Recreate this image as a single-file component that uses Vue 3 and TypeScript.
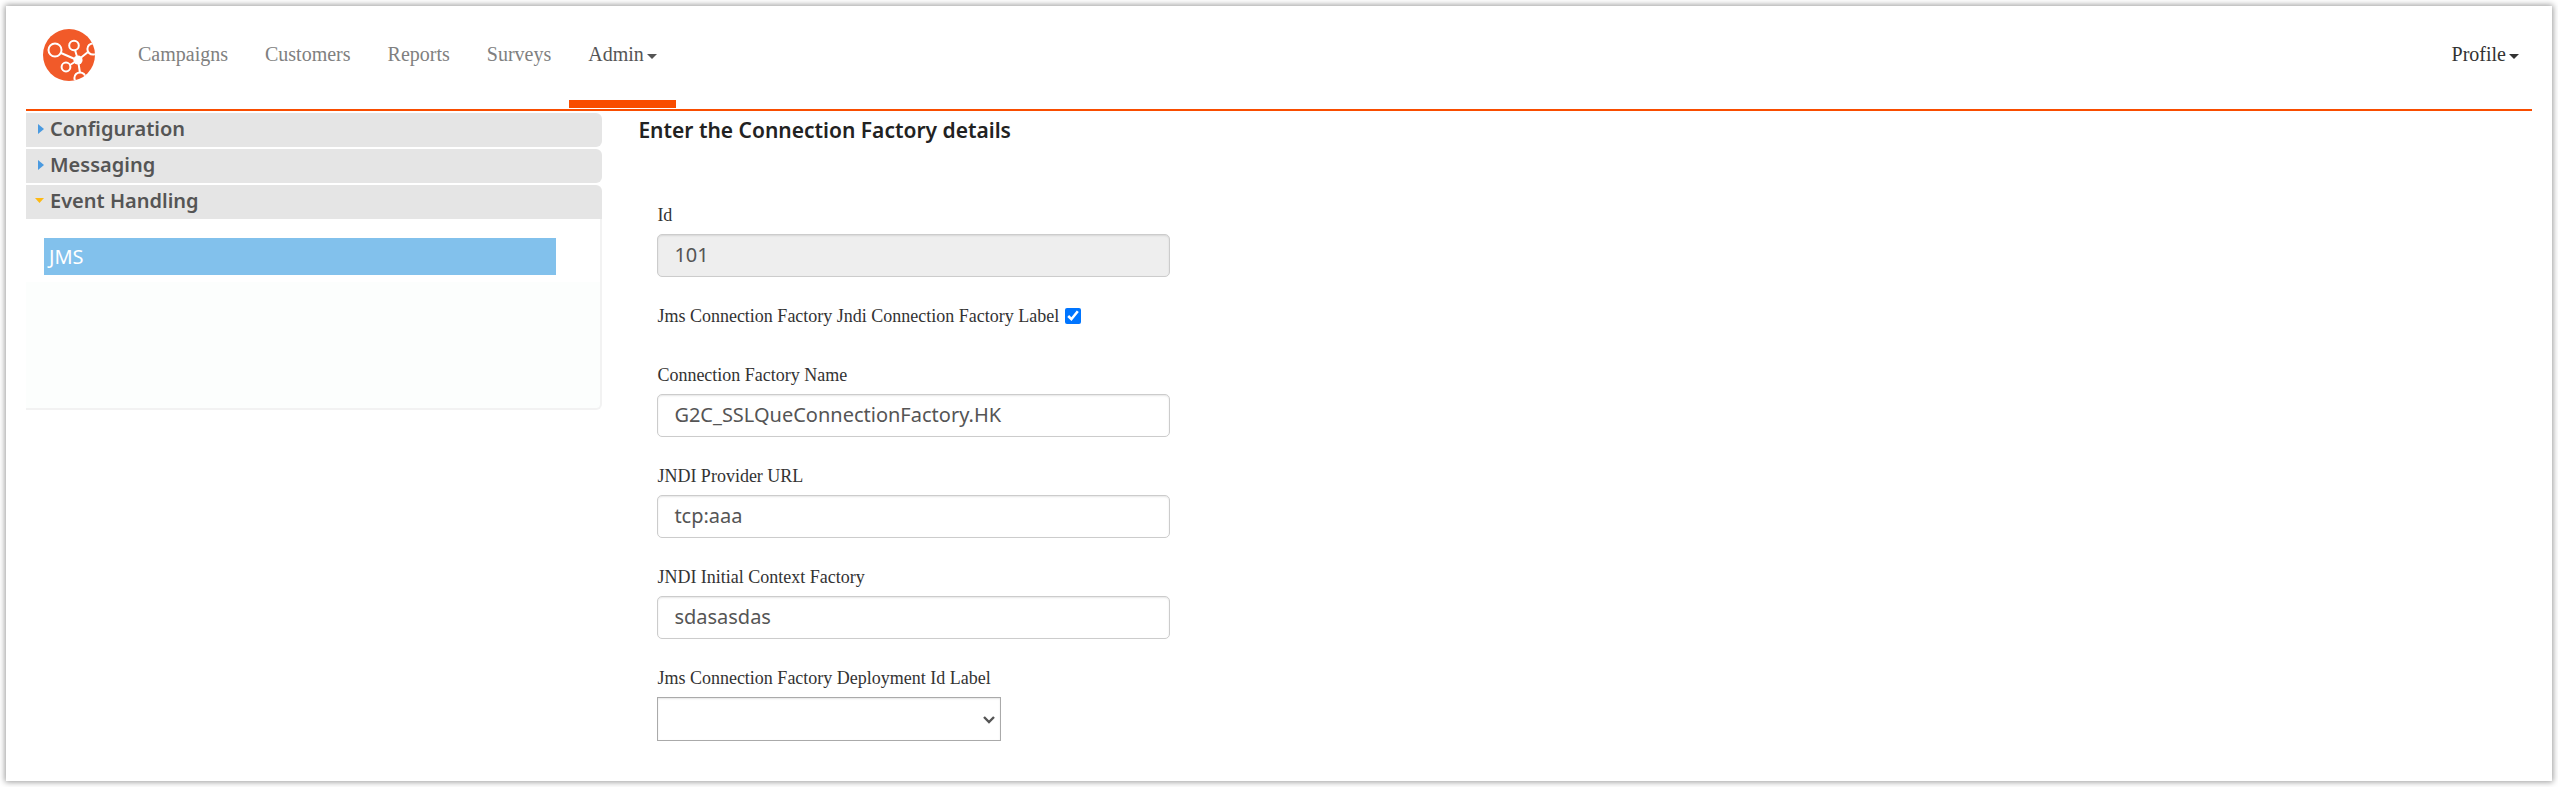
<script setup lang="ts">
import { ref } from 'vue'

interface Field {
  id: string
  label: string
  value: string
}

const navItems: string[] = ['Campaigns', 'Customers', 'Reports', 'Surveys']
const closedSections: string[] = ['Configuration', 'Messaging']

const factoryId = ref('101')
const useJndi = ref(true)
const deployment = ref('')
const fields = ref<Field[]>([
  { id: 'factory-name', label: 'Connection Factory Name', value: 'G2C_SSLQueConnectionFactory.HK' },
  { id: 'provider-url', label: 'JNDI Provider URL', value: 'tcp:aaa' },
  { id: 'context-factory', label: 'JNDI Initial Context Factory', value: 'sdasasdas' },
])
</script>

<template>
  <div class="card">
    <header class="header">
      <a class="logo" href="#" aria-label="Home">
        <svg viewBox="0 0 52 52" width="52" height="52">
          <defs>
            <clipPath id="disc"><circle cx="26" cy="26" r="26" /></clipPath>
          </defs>
          <g clip-path="url(#disc)">
            <rect width="52" height="52" fill="#f15a29" />
            <g fill="none" stroke="#fff" stroke-width="2">
              <circle cx="12" cy="21" r="6.5" />
              <circle cx="31" cy="16.5" r="4.8" />
              <circle cx="23" cy="38" r="4.4" />
              <circle cx="50" cy="20" r="5.6" />
              <circle cx="37" cy="49" r="5.6" />
              <path d="M18 24 34 31M32 21l3 10M27 36l8-5M45 23 35 31M35 31l2 13" />
            </g>
            <circle cx="35" cy="31" r="4.6" fill="#fff" />
          </g>
        </svg>
      </a>
      <nav class="nav">
        <a v-for="item in navItems" :key="item" class="nav-link" href="#">{{ item }}</a>
        <a class="nav-link active" href="#">Admin<span class="caret"></span></a>
      </nav>
      <button class="profile" type="button">Profile<span class="caret"></span></button>
    </header>

    <div class="body">
      <aside class="sidebar">
        <button v-for="section in closedSections" :key="section" class="section" type="button">
          <svg class="marker" viewBox="0 0 10 10" width="10" height="10"><path d="M3 0 9 5 3 10z" fill="#4a9ae0" /></svg>{{ section }}
        </button>
        <button class="section open" type="button" aria-expanded="true">
          <svg class="marker" viewBox="0 0 10 10" width="10" height="10"><path d="M0 2h9L4.500 7z" fill="#fdb913" /></svg>Event Handling
        </button>
        <div class="panel">
          <a class="panel-link" href="#">JMS</a>
        </div>
      </aside>

      <main class="content">
        <h1 class="title">Enter the Connection Factory details</h1>
        <form class="form" @submit.prevent>
          <div class="field">
            <label for="factory-id">Id</label>
            <input id="factory-id" v-model="factoryId" class="text" type="text" disabled />
          </div>
          <div class="check">
            <label for="use-jndi">Jms Connection Factory Jndi Connection Factory Label</label>
            <input id="use-jndi" v-model="useJndi" type="checkbox" />
          </div>
          <div v-for="field in fields" :key="field.id" class="field">
            <label :for="field.id">{{ field.label }}</label>
            <input :id="field.id" v-model="field.value" class="text" type="text" />
          </div>
          <div class="field">
            <label for="deployment">Jms Connection Factory Deployment Id Label</label>
            <div class="select-wrap">
              <select id="deployment" v-model="deployment">
                <option value=""></option>
              </select>
              <svg class="chevron" viewBox="0 0 12 8" width="12" height="8">
                <path d="M1 1 6 6 11 1" fill="none" stroke="#555" stroke-width="2.400" />
              </svg>
            </div>
          </div>
        </form>
      </main>
    </div>
  </div>
</template>

<style>
body {
  background: #fff;
}
</style>

<style scoped>
* {
  box-sizing: border-box;
}

.card {
  margin: 6px;
  padding: 0 20px 40px;
  min-height: calc(100vh - 12px);
  background: #fff;
  box-shadow: 0 0 6px 1px rgba(0, 0, 0, 0.4);
  font-family: 'Liberation Serif', serif;
}

.header {
  display: flex;
  align-items: stretch;
  height: 105px;
  padding: 0 13px 1px 17px;
  border-bottom: 2px solid #f94d00;
}

.logo {
  margin: 23px 24px 0 0;
  height: 52px;
}

.nav {
  display: flex;
}

.nav-link,
.profile {
  padding: 36px 18px 0 19px;
  font: 20px/24px 'Liberation Serif', serif;
  color: #808080;
  text-decoration: none;
  white-space: nowrap;
}

.nav-link.active {
  padding-right: 19px;
  color: #555;
  border-bottom: 8px solid #f94d00;
}

.profile {
  display: flex;
  align-items: flex-start;
  margin-left: auto;
  padding-right: 0;
  border: 0;
  background: none;
  color: #333;
}

.caret {
  display: inline-block;
  margin-left: 3px;
  border: 5px solid transparent;
  border-top-color: currentColor;
  border-bottom: 0;
  vertical-align: middle;
}

.profile .caret {
  margin-top: 12px;
}

.body {
  display: flex;
}

.sidebar {
  display: flex;
  flex-direction: column;
  gap: 2px;
  flex: 0 0 23%;
  padding-top: 2px;
}

.section {
  display: flex;
  align-items: center;
  gap: 5px;
  height: 34px;
  padding: 0 9px 2px;
  border: 0;
  border-radius: 0 6px 6px 0;
  background: #e5e5e5;
  color: #555;
  font: 600 20px/24px 'Noto Sans', sans-serif;
  text-align: left;
}

.section.open {
  border-radius: 0 6px 0 0;
}

.panel {
  height: 191px;
  margin-top: -2px;
  padding: 19px 44px 0 18px;
  border: solid #f2f2f2;
  border-width: 0 2px 2px 0;
  border-radius: 0 0 6px 0;
  background: linear-gradient(#fff 63px, #fcfefd 63px);
}

.panel-link {
  display: block;
  padding: 0 5px;
  background: #82c1ec;
  color: #fff;
  font: 20px/37px 'Noto Sans', sans-serif;
  text-decoration: none;
}

.content {
  flex: 1;
  min-width: 0;
  padding-left: 36px;
}

.title {
  margin: 0;
  padding-top: 5px;
  color: #222;
  font: 600 21px/28px 'Noto Sans', sans-serif;
}

.form {
  display: flex;
  flex-direction: column;
  max-width: 532px;
  padding: 59px 0 0 19px;
}

.field {
  display: flex;
  flex-direction: column;
  gap: 7px;
  margin-bottom: 27px;
}

.field:last-child {
  margin-bottom: 0;
}

label {
  color: #333;
  font-size: 18px;
  line-height: 24px;
}

.text {
  width: 100%;
  height: 43px;
  padding: 0 16px 2px;
  border: 1px solid #ccc;
  border-radius: 5px;
  background: #fff;
  box-shadow: inset 0 1px 2px rgba(0, 0, 0, 0.1);
  color: #555;
  font: 20px/24px 'Noto Sans', sans-serif;
}

.text:disabled {
  background: #eee;
}

.check {
  display: flex;
  align-items: center;
  gap: 6px;
  margin-bottom: 35px;
}

.check input {
  width: 16px;
  height: 16px;
  margin: 0;
  accent-color: #0075ff;
}

.select-wrap {
  position: relative;
  width: 344px;
}

select {
  display: block;
  width: 100%;
  height: 44px;
  border: 1px solid #aaa;
  border-radius: 0;
  background: #fff;
  box-shadow: inset 0 1px 2px rgba(0, 0, 0, 0.1);
  appearance: none;
}

.chevron {
  position: absolute;
  top: 19px;
  right: 6px;
  pointer-events: none;
}
</style>
